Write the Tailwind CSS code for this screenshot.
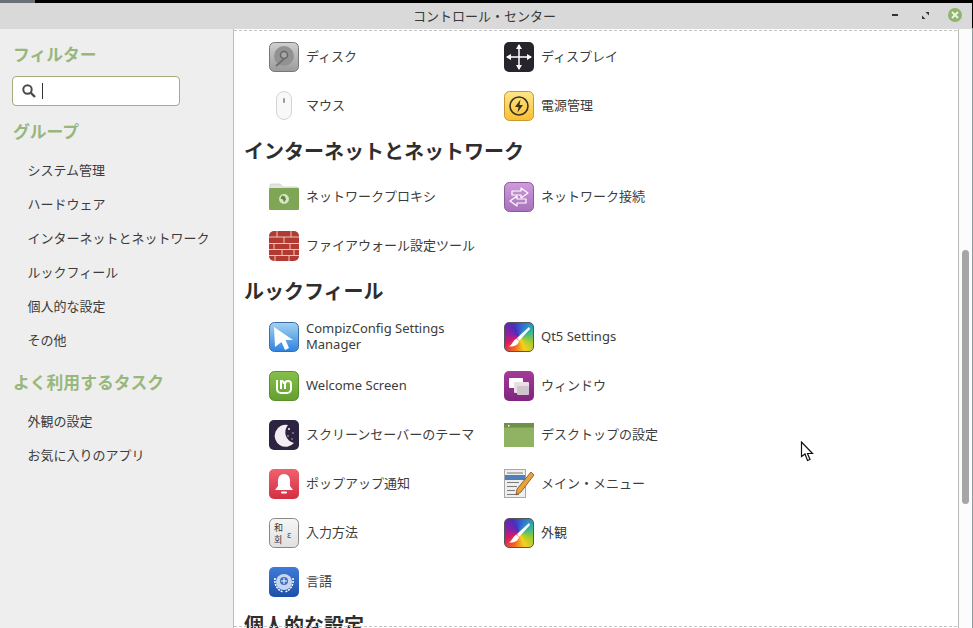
<!DOCTYPE html>
<html lang="ja">

<head>
  <meta charset="UTF-8">
  <title>コントロール・センター</title>
  <script src="https://cdn.jsdelivr.net/npm/@tailwindcss/browser@4"></script>
</head>

<body class="relative w-[973px] h-[628px] overflow-hidden bg-black text-[13px] text-[#3c3c3c] font-['Noto_Sans','Noto_Sans_CJK_JP',sans-serif]">
  <!-- shared gradients -->
  <svg class="absolute w-0 h-0">
    <defs>
      <linearGradient id="g-disk" x1="0" y1="0" x2="0" y2="1"><stop offset="0" stop-color="#d0d0d0"/><stop offset="1" stop-color="#9a9a9a"/></linearGradient>
      <linearGradient id="g-power" x1="0" y1="0" x2="0" y2="1"><stop offset="0" stop-color="#fde68a"/><stop offset="1" stop-color="#fbbf30"/></linearGradient>
      <linearGradient id="g-net" x1="0" y1="0" x2="0" y2="1"><stop offset="0" stop-color="#cf9bdc"/><stop offset="1" stop-color="#a871bb"/></linearGradient>
      <linearGradient id="g-compiz" x1="0" y1="0" x2="0" y2="1"><stop offset="0" stop-color="#a5d3f2"/><stop offset="1" stop-color="#2f83df"/></linearGradient>
      <linearGradient id="g-mint" x1="0" y1="0" x2="0" y2="1"><stop offset="0" stop-color="#86bf4a"/><stop offset="1" stop-color="#64a02f"/></linearGradient>
      <linearGradient id="g-win" x1="0" y1="0" x2="0" y2="1"><stop offset="0" stop-color="#a43a98"/><stop offset="1" stop-color="#7f2580"/></linearGradient>
      <linearGradient id="g-bell" x1="0" y1="0" x2="0" y2="1"><stop offset="0" stop-color="#f0626e"/><stop offset="1" stop-color="#d42f42"/></linearGradient>
      <linearGradient id="g-key" x1="0" y1="0" x2="0" y2="1"><stop offset="0" stop-color="#f6f6f6"/><stop offset="1" stop-color="#e0e0e0"/></linearGradient>
      <linearGradient id="g-lang" x1="0" y1="0" x2="0" y2="1"><stop offset="0" stop-color="#3f7bd8"/><stop offset="1" stop-color="#1d4fa8"/></linearGradient>
    </defs>
  </svg>

  <div class="h-[3px] w-[35px] bg-[#6b6f78]"></div>
  <div class="absolute right-0 top-[28px] bottom-0 w-px bg-[#8f9a9a]"></div>

  <div class="w-[972px] h-[625px] flex flex-col bg-white">
    <!-- title bar -->
    <header class="relative h-[26px] shrink-0 bg-[#d9d9d9] flex items-center justify-center pt-[2px] pr-[3px] text-[13px] text-[#3a3a3a]">
      コントロール・センター
      <div class="absolute right-[10px] top-[5px] flex items-center">
        <span class="w-[6px] h-[2px] bg-[#333]"></span>
        <svg class="ml-[24px] w-[7px] h-[7px]" viewBox="0 0 7 7"><path d="M3.5 0H7V3.5ZM3.5 7H0V3.5Z" fill="#333"/></svg>
        <span class="ml-[19px] w-[14px] h-[14px] rounded-full bg-[#8fb46e] flex items-center justify-center">
          <svg class="w-[8px] h-[8px]" viewBox="0 0 8 8"><path d="M1 1L7 7M7 1L1 7" stroke="#eef3e6" stroke-width="2"/></svg>
        </span>
      </div>
    </header>

    <div class="flex flex-1 min-h-0">
      <!-- sidebar -->
      <aside class="w-[234px] shrink-0 bg-[#eeeeee] border-r border-[#bdbdbd] pt-[14px] pl-[12px]">
        <h2 class="h-[24px] leading-[24px] pl-px text-[16.8px] font-bold text-[#97b77d]">フィルター</h2>
        <div class="mt-[9px] w-[168px] h-[30px] bg-white border border-[#a3ad7e] rounded-[4px] flex items-center pl-[9px]">
          <svg class="w-[14px] h-[14px]" viewBox="0 0 14 14" fill="none" stroke="#4a4a4a"><circle cx="5.5" cy="5.5" r="4.2" stroke-width="2"/><path d="M8.5 8.5L13 13" stroke-width="2.4"/></svg>
          <span class="ml-[6px] w-px h-[16px] bg-[#333]"></span>
        </div>
        <h2 class="mt-[14px] h-[24px] leading-[24px] pl-px text-[16.8px] font-bold text-[#97b77d]">グループ</h2>
        <ul class="mt-[9px] pl-[15.5px]">
          <li class="h-[34px] leading-[34px]">システム管理</li>
          <li class="h-[34px] leading-[34px]">ハードウェア</li>
          <li class="h-[34px] leading-[34px]">インターネットとネットワーク</li>
          <li class="h-[34px] leading-[34px]">ルックフィール</li>
          <li class="h-[34px] leading-[34px]">個人的な設定</li>
          <li class="h-[34px] leading-[34px]">その他</li>
        </ul>
        <h2 class="mt-[14px] h-[24px] leading-[24px] pl-px text-[16.8px] font-bold text-[#97b77d]">よく利用するタスク</h2>
        <ul class="mt-[9px] pl-[15.5px]">
          <li class="h-[34px] leading-[34px]">外観の設定</li>
          <li class="h-[34px] leading-[34px]">お気に入りのアプリ</li>
        </ul>
      </aside>

      <!-- content -->
      <main class="relative flex-1 min-w-0 overflow-hidden pl-[10px] pt-[3px]">
        <div class="absolute inset-x-0 top-px border-t border-dashed border-[#c4c4c4]"></div>
        <div class="absolute inset-x-0 bottom-px border-t border-dashed border-[#c4c4c4] z-10"></div>

        <section class="grid grid-cols-[235px_235px] pl-[25px]">
          <div class="h-[49px] flex items-center gap-[7px]">
            <svg class="w-[30px] h-[30px]" viewBox="0 0 30 30"><rect x=".5" y=".5" width="29" height="29" rx="5" fill="url(#g-disk)" stroke="#777"/><circle cx="15" cy="14" r="10" fill="#929292"/><circle cx="15" cy="13" r="3.5" fill="#a8a8a8" stroke="#666" stroke-width="1.5"/><path d="M7 24L15 17" stroke="#6e6e6e" stroke-width="2"/></svg>
            <span>ディスク</span>
          </div>
          <div class="h-[49px] flex items-center gap-[7px]">
            <svg class="w-[30px] h-[30px]" viewBox="0 0 30 30"><rect width="30" height="30" rx="5" fill="#28242c"/><path d="M15 3V27M3 15H27" stroke="#fff" stroke-width="1.5"/><path d="M15 2L12 7H18ZM15 28L12 23H18ZM2 15L7 12V18ZM28 15L23 12V18Z" fill="#fff"/></svg>
            <span>ディスプレイ</span>
          </div>
          <div class="h-[49px] flex items-center gap-[7px]">
            <svg class="w-[30px] h-[30px]" viewBox="0 0 30 30"><rect x="7.5" y=".5" width="15" height="28" rx="7.5" fill="#f8f8f8" stroke="#d4d4d4"/><rect x="14" y="7" width="2" height="5" rx="1" fill="#999"/></svg>
            <span>マウス</span>
          </div>
          <div class="h-[49px] flex items-center gap-[7px]">
            <svg class="w-[30px] h-[30px]" viewBox="0 0 30 30"><rect x=".5" y=".5" width="29" height="29" rx="5" fill="url(#g-power)" stroke="#c49a30"/><circle cx="15" cy="15" r="9" fill="none" stroke="#3a3320" stroke-width="1.6"/><path d="M16.5 8.5L11 16H14.5L13.5 21.5L19 14H15.5Z" fill="#3a3320"/></svg>
            <span>電源管理</span>
          </div>
        </section>

        <h1 class="h-[42px] leading-[43px] text-[20px] font-bold text-[#2e2e2e]">インターネットとネットワーク</h1>

        <section class="grid grid-cols-[235px_235px] pl-[25px]">
          <div class="h-[49px] flex items-center gap-[7px]">
            <svg class="w-[30px] h-[30px]" viewBox="0 0 30 30"><path d="M1 3a1 1 0 0 1 1-1h9l3 3h14a1 1 0 0 1 1 1v2H1Z" fill="#e4e4e4" stroke="#c8c8c8" stroke-width=".7"/><rect y="6" width="30" height="22" rx="1" fill="#7fa655"/><circle cx="15" cy="17" r="5" fill="#d7e4c6"/><path d="M13 13.5l3 1 1 3-2 3-1-3-2.5-1Z" fill="#5f8a3c"/></svg>
            <span>ネットワークプロキシ</span>
          </div>
          <div class="h-[49px] flex items-center gap-[7px]">
            <svg class="w-[30px] h-[30px]" viewBox="0 0 30 30"><rect x=".5" y=".5" width="29" height="29" rx="5" fill="url(#g-net)" stroke="#8a5a9a"/><path d="M22 17H13V14L6 19L13 24V21H22Z" fill="none" stroke="#fff" stroke-width="1.2" stroke-linejoin="round"/><path d="M8 9H17V6L24 11L17 16V13H8Z" fill="none" stroke="#fff" stroke-width="1.2" stroke-linejoin="round"/></svg>
            <span>ネットワーク接続</span>
          </div>
          <div class="h-[49px] flex items-center gap-[7px]">
            <svg class="w-[30px] h-[30px]" viewBox="0 0 30 30"><rect width="30" height="30" rx="5" fill="#b23a32"/><path d="M0 6H30M0 12.500H30M0 18.500H30M0 24.500H30M8 0V6M22 0V6M15 6V12.500M5 12.500V18.500M21 12.500V18.500M13 18.500V24.500M25 18.500V24.500M6 24.500V30M20 24.500V30" stroke="#e9c9bd" stroke-width="1" fill="none"/></svg>
            <span>ファイアウォール設定ツール</span>
          </div>
        </section>

        <h1 class="h-[42px] leading-[43px] text-[20px] font-bold text-[#2e2e2e]">ルックフィール</h1>

        <section class="grid grid-cols-[235px_235px] pl-[25px]">
          <div class="h-[49px] flex items-center gap-[7px]">
            <svg class="w-[30px] h-[30px] shrink-0" viewBox="0 0 30 30"><rect x=".5" y=".5" width="29" height="29" rx="5" fill="url(#g-compiz)" stroke="#3a6ea8"/><path d="M5 5L24 18H16.500L20 26L16 28L12.500 20L6 25Z" fill="#fff"/></svg>
            <span class="leading-[16px] w-[140px] -mt-[2px]">CompizConfig Settings Manager</span>
          </div>
          <div class="h-[49px] flex items-center gap-[7px]">
            <div class="w-[30px] h-[30px] rounded-[5px] border border-[#555] bg-[conic-gradient(from_20deg,#2f6fd8,#2fb5a0,#9ccc30,#f5d020,#f26a20,#d81b60,#8a1fa8,#4a2fb8,#2f6fd8)] flex items-center justify-center">
              <svg class="w-[28px] h-[28px]" viewBox="0 0 28 28"><path d="M24 4L12 15L14 18L25 6Z" fill="#fff"/><path d="M11.500 15.500L14 18.500C13 22 9 24 4 23.500C7 22 7.500 18 11.500 15.500Z" fill="#fff"/></svg>
            </div>
            <span>Qt5 Settings</span>
          </div>
          <div class="h-[49px] flex items-center gap-[7px]">
            <svg class="w-[30px] h-[30px]" viewBox="0 0 30 30"><rect x=".5" y=".5" width="29" height="29" rx="5" fill="url(#g-mint)" stroke="#5a8f2c"/><path d="M8 9V18a4 4 0 0 0 4 4H18a4 4 0 0 0 4-4V13a3 3 0 0 0-6 0V18M15 13a3 3 0 0 0-3-3V18" fill="none" stroke="#fff" stroke-width="2"/></svg>
            <span>Welcome Screen</span>
          </div>
          <div class="h-[49px] flex items-center gap-[7px]">
            <svg class="w-[30px] h-[30px]" viewBox="0 0 30 30"><rect width="30" height="30" rx="5" fill="url(#g-win)"/><rect x="5" y="7" width="14" height="10" rx="1" fill="#fff"/><rect x="10" y="11" width="15" height="11" rx="1" fill="#e8dfe6"/><rect x="13" y="15" width="12" height="9" rx="1" fill="#cfc4cc"/></svg>
            <span>ウィンドウ</span>
          </div>
          <div class="h-[49px] flex items-center gap-[7px]">
            <svg class="w-[30px] h-[30px]" viewBox="0 0 30 30"><rect width="30" height="30" rx="5" fill="#2c2440"/><path d="M19 5A11 11 0 1 0 25 23A11 11 0 0 1 19 5Z" fill="#f2eef2"/><circle cx="20" cy="9" r="1" fill="#fff"/><circle cx="24" cy="13" r=".8" fill="#d8cbb8"/><circle cx="19" cy="16" r=".8" fill="#d8cbb8"/><circle cx="23" cy="19" r=".7" fill="#d8cbb8"/></svg>
            <span>スクリーンセーバーのテーマ</span>
          </div>
          <div class="h-[49px] flex items-center gap-[7px]">
            <svg class="w-[30px] h-[30px]" viewBox="0 0 30 30"><rect y="3" width="30" height="24" fill="#8fb263"/><rect y="3" width="30" height="4.500" fill="#6f8f4b"/><rect x="4" y="5" width="1.500" height="1.500" fill="#fff"/></svg>
            <span>デスクトップの設定</span>
          </div>
          <div class="h-[49px] flex items-center gap-[7px]">
            <svg class="w-[30px] h-[30px]" viewBox="0 0 30 30"><rect width="30" height="30" rx="5" fill="url(#g-bell)"/><path d="M15 5C19 5 21 8 21 12V17L24 21H6L9 17V12C9 8 11 5 15 5Z" fill="#fff"/><rect x="12" y="22.500" width="6" height="2" rx="1" fill="#fff"/></svg>
            <span>ポップアップ通知</span>
          </div>
          <div class="h-[49px] flex items-center gap-[7px]">
            <svg class="w-[30px] h-[30px]" viewBox="0 0 30 30"><rect x=".5" y=".5" width="21" height="28" fill="#eeeeee" stroke="#a8a8a8"/><rect x="1" y="6" width="20" height="5" fill="#4f7fb8"/><path d="M3 4H19M3 8.500H19M3 13.500H15M3 17.500H13M3 21.500H11M3 25.500H15" stroke="#7a7a7a" stroke-width="1.200"/><path d="M27 3L30 6L17 23L12 26L13 20Z" fill="#e8a33a" stroke="#7a4a20" stroke-width=".8"/></svg>
            <span>メイン・メニュー</span>
          </div>
          <div class="h-[49px] flex items-center gap-[7px]">
            <svg class="w-[30px] h-[30px]" viewBox="0 0 30 30"><rect x=".5" y=".5" width="29" height="29" rx="5" fill="url(#g-key)" stroke="#888"/><text x="5" y="13" font-size="9" font-family="Noto Sans CJK JP" fill="#333">和</text><text x="5" y="25" font-size="9" font-family="Noto Sans CJK KR" fill="#333">회</text><text x="18" y="20" font-size="9" fill="#555">ε</text></svg>
            <span>入力方法</span>
          </div>
          <div class="h-[49px] flex items-center gap-[7px]">
            <div class="w-[30px] h-[30px] rounded-[5px] border border-[#555] bg-[conic-gradient(from_20deg,#2f6fd8,#2fb5a0,#9ccc30,#f5d020,#f26a20,#d81b60,#8a1fa8,#4a2fb8,#2f6fd8)] flex items-center justify-center">
              <svg class="w-[28px] h-[28px]" viewBox="0 0 28 28"><path d="M24 4L12 15L14 18L25 6Z" fill="#fff"/><path d="M11.500 15.500L14 18.500C13 22 9 24 4 23.500C7 22 7.500 18 11.500 15.500Z" fill="#fff"/></svg>
            </div>
            <span>外観</span>
          </div>
          <div class="h-[49px] flex items-center gap-[7px]">
            <svg class="w-[30px] h-[30px]" viewBox="0 0 30 30"><rect width="30" height="30" rx="5" fill="url(#g-lang)"/><circle cx="15" cy="15" r="8" fill="#c6d6ee"/><circle cx="15" cy="14" r="4" fill="#3f6fc0"/><path d="M12 14H18M15 11V17" stroke="#fff" stroke-width="1"/><path d="M6 11C5 17 8 23 14 25M24 11C25 17 22 23 16 25" fill="none" stroke="#fff" stroke-width="1.500" stroke-dasharray="2 1"/></svg>
            <span>言語</span>
          </div>
        </section>

        <h1 class="h-[42px] leading-[39px] text-[20px] font-bold text-[#2e2e2e]">個人的な設定</h1>

        <!-- scrollbar -->
        <div class="absolute right-0 top-0 bottom-0 w-[14px] bg-[#fcfcfc] border-l border-[#b8b8b8] z-20">
          <div class="absolute left-[3px] top-[221px] w-[7px] h-[254px] rounded-full bg-[#a6a6a6]"></div>
        </div>
      </main>
    </div>
  </div>

  <!-- mouse pointer -->
  <svg class="absolute left-[800px] top-[441px] w-[15px] h-[21px] z-30" viewBox="0 0 15 21"><path d="M1.500 1V15.500L5 13L7.500 19.500L10 18.500L7.500 12.500H12.500Z" fill="#fff" stroke="#111" stroke-width="1.200" stroke-linejoin="miter"/></svg>
</body>

</html>
